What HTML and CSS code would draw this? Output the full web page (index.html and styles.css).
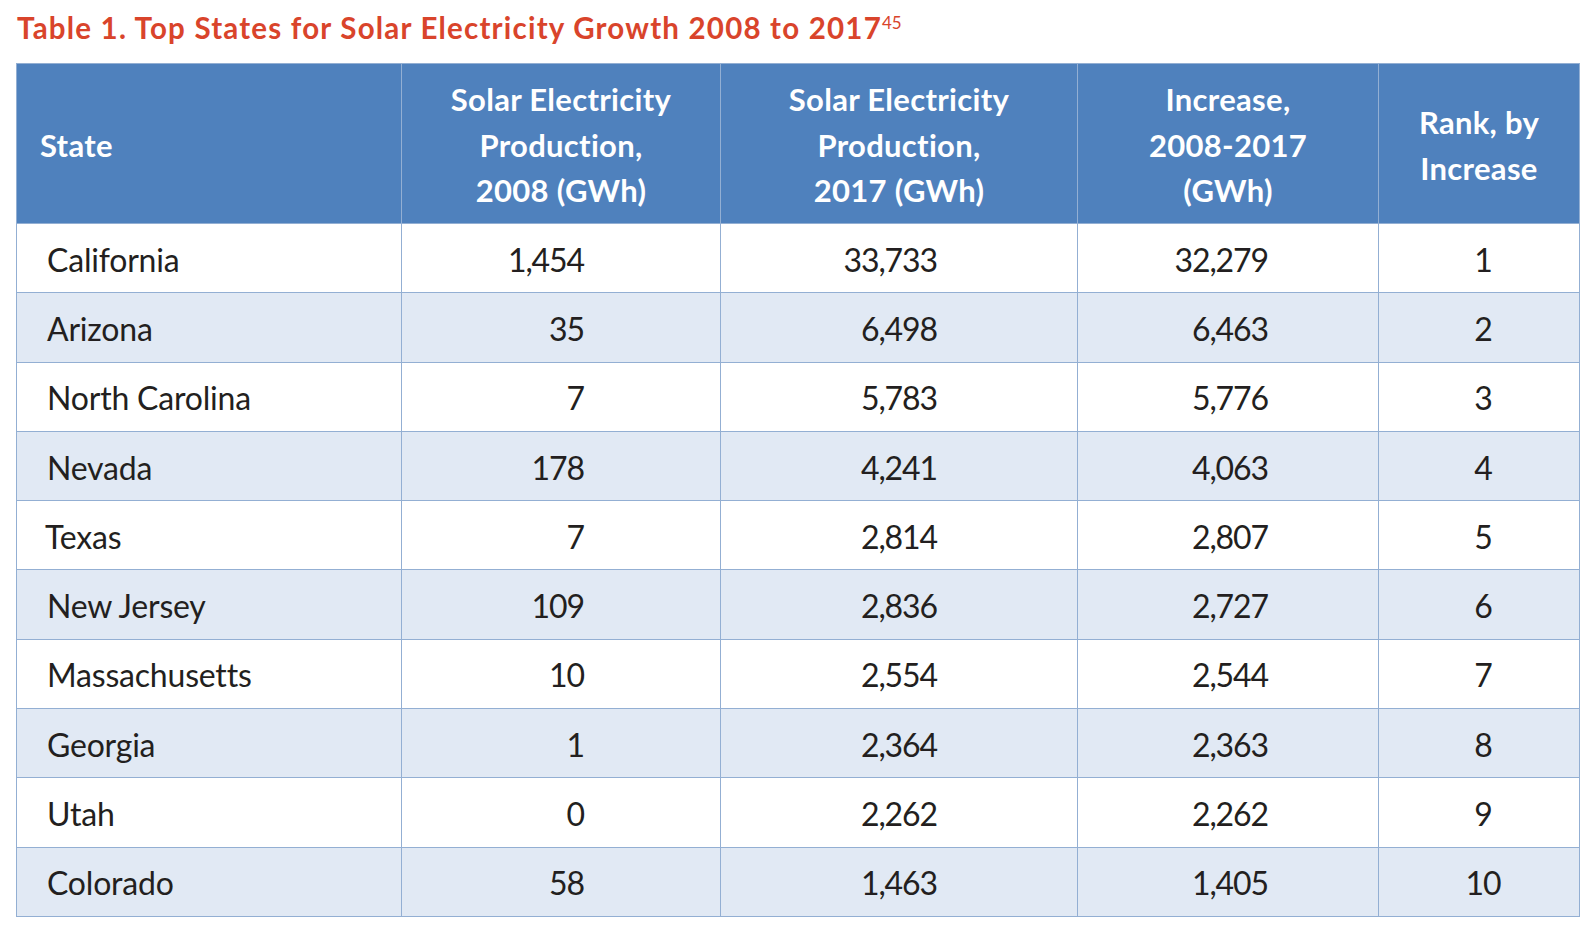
FILE: index.html
```html
<!DOCTYPE html>
<html lang="en">
<head>
<meta charset="utf-8">
<title>Top States for Solar Electricity Growth</title>
<link rel="stylesheet" href="styles.css">
</head>
<body>
<div class="page">
  <h1 class="title">Table 1. Top States for Solar Electricity Growth 2008 to 2017<sup class="ref">45</sup></h1>
  <table class="data">
    <colgroup>
      <col class="c1"><col class="c2"><col class="c3"><col class="c4"><col class="c5">
    </colgroup>
    <thead>
      <tr>
        <th class="state">State</th>
        <th>Solar Electricity<br>Production,<br>2008 (GWh)</th>
        <th>Solar Electricity<br>Production,<br>2017 (GWh)</th>
        <th>Increase,<br>2008-2017<br>(GWh)</th>
        <th>Rank, by<br>Increase</th>
      </tr>
    </thead>
    <tbody>
      <tr><td class="state">California</td><td class="n2">1,454</td><td class="n3">33,733</td><td class="n4">32,279</td><td class="rank">1</td></tr>
      <tr><td class="state">Arizona</td><td class="n2">35</td><td class="n3">6,498</td><td class="n4">6,463</td><td class="rank">2</td></tr>
      <tr><td class="state">North Carolina</td><td class="n2">7</td><td class="n3">5,783</td><td class="n4">5,776</td><td class="rank">3</td></tr>
      <tr><td class="state">Nevada</td><td class="n2">178</td><td class="n3">4,241</td><td class="n4">4,063</td><td class="rank">4</td></tr>
      <tr><td class="state tx">Texas</td><td class="n2">7</td><td class="n3">2,814</td><td class="n4">2,807</td><td class="rank">5</td></tr>
      <tr><td class="state">New Jersey</td><td class="n2">109</td><td class="n3">2,836</td><td class="n4">2,727</td><td class="rank">6</td></tr>
      <tr><td class="state">Massachusetts</td><td class="n2">10</td><td class="n3">2,554</td><td class="n4">2,544</td><td class="rank">7</td></tr>
      <tr><td class="state">Georgia</td><td class="n2">1</td><td class="n3">2,364</td><td class="n4">2,363</td><td class="rank">8</td></tr>
      <tr><td class="state">Utah</td><td class="n2">0</td><td class="n3">2,262</td><td class="n4">2,262</td><td class="rank">9</td></tr>
      <tr><td class="state">Colorado</td><td class="n2">58</td><td class="n3">1,463</td><td class="n4">1,405</td><td class="rank">10</td></tr>
    </tbody>
  </table>
</div>
</body>
</html>
```

FILE: styles.css
```css
html, body {
  margin: 0;
  padding: 0;
  background: #ffffff;
}

.page {
  padding-left: 16px;
  font-family: Lato, "Open Sans", "DejaVu Sans", sans-serif;
}

.title {
  margin: 0 0 17px 1px;
  padding-top: 10px;
  font-size: 29.5px;
  line-height: 36px;
  font-weight: 700;
  letter-spacing: 1.2px;
  color: #d9442b;
  white-space: nowrap;
}

.ref {
  font-size: 17px;
  font-weight: 400;
  letter-spacing: 0;
  vertical-align: top;
  position: relative;
  top: -5px;
  margin-left: 0;
}

.data {
  border-collapse: collapse;
  table-layout: fixed;
  width: 1563px;
}

.c1 { width: 385px; }
.c2 { width: 319px; }
.c3 { width: 357px; }
.c4 { width: 301px; }
.c5 { width: 201px; }

.data th,
.data td {
  border: 1px solid #93afd3;
  padding: 0;
}

.data thead th {
  height: 160px;
  background: #4f81bd;
  color: #ffffff;
  font-size: 31px;
  font-weight: 700;
  line-height: 45.5px;
  letter-spacing: 0.3px;
  text-align: center;
  vertical-align: middle;
  padding-top: 4px;
  box-sizing: border-box;
}

.data thead th.state {
  text-align: left;
  padding-left: 23px;
}

.data tbody tr {
  height: 69.3px;
}

.data tbody tr:nth-child(even) td {
  background: #e1e9f4;
}

.data tbody td {
  font-size: 32px;
  line-height: 40px;
  color: #231f20;
  vertical-align: middle;
  padding-top: 3px;
  box-sizing: border-box;
}

.data td.state {
  padding-left: 30px;
  letter-spacing: -0.2px;
  text-align: left;
}

.data td.tx {
  padding-left: 28px;
}

.data td.n2,
.data td.n3,
.data td.n4,
.data td.rank {
  letter-spacing: -1.1px;
}

.data td.n2 {
  text-align: right;
  padding-right: 136px;
}

.data td.n3 {
  text-align: right;
  padding-right: 140px;
}

.data td.n4 {
  text-align: right;
  padding-right: 110px;
}

.data td.rank {
  text-align: center;
  padding-left: 8px;
}
```
